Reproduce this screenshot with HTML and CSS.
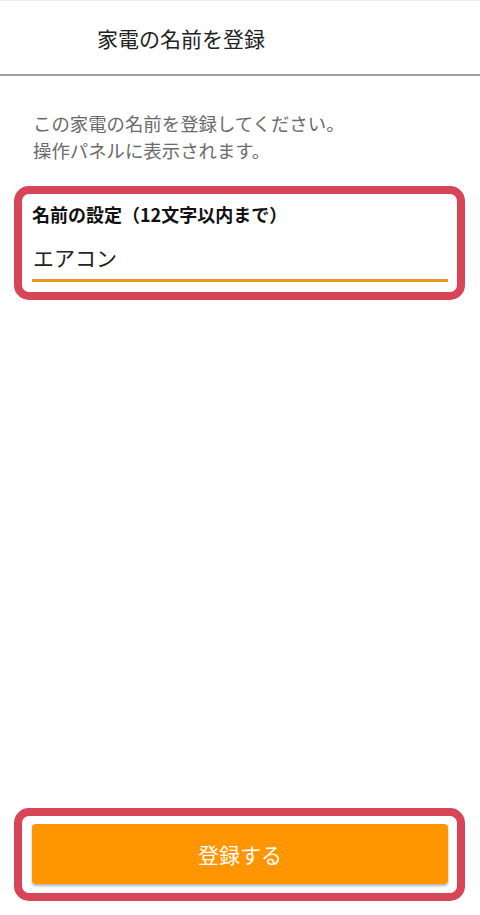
FILE: index.html
```html
<!DOCTYPE html>
<html lang="ja">
<head>
<meta charset="utf-8">
<title>家電の名前を登録</title>
<link rel="stylesheet" href="styles.css">
</head>
<body>
<div class="page">
  <header class="header">
    <h1 class="title">家電の名前を登録</h1>
  </header>
  <p class="desc">この家電の名前を登録してください。<br>操作パネルに表示されます。</p>
  <div class="highlight field-box">
    <label class="label" for="name">名前の設定（12文字以内まで）</label>
    <input class="input" id="name" type="text" value="エアコン">
  </div>
  <div class="highlight button-box">
    <button class="submit" type="button">登録する</button>
  </div>
</div>
</body>
</html>
```
FILE: styles.css
```css
html, body {
  margin: 0;
  padding: 0;
  background: #ffffff;
}
body {
  font-family: "Noto Sans CJK JP", "Noto Sans", sans-serif;
  color: #222;
}
.page {
  display: flex;
  flex-direction: column;
  min-height: 915px;
  box-sizing: border-box;
}
.header {
  height: 73px;
  border-top: 1px solid #ececec;
  border-bottom: 2px solid #a0a0a0;
  display: flex;
  align-items: center;
  padding-left: 97px;
}
.title {
  margin: 0;
  font-size: 21px;
  font-weight: 400;
  line-height: 28px;
  color: #222;
}
.desc {
  margin: 34px 0 0;
  padding-left: 33px;
  font-size: 18.4px;
  line-height: 27px;
  color: #6a6a6a;
}
.highlight {
  border: 8px solid #d84556;
  border-radius: 15px;
  margin: 0 15px 0 14px;
  background: #fff;
}
.field-box {
  margin-top: 22px;
  padding: 8px 9px 10px 10px;
  display: flex;
  flex-direction: column;
}
.label {
  font-size: 18px;
  font-weight: 700;
  line-height: 24px;
  color: #111;
}
.input {
  margin-top: 18px;
  border: none;
  border-bottom: 3px solid #f0961a;
  outline: none;
  padding: 0 0 9px 1px;
  font-family: "Noto Sans CJK JP", "Noto Sans", sans-serif;
  font-size: 21px;
  line-height: 26px;
  height: 26px;
  color: #222;
  background: transparent;
}
.button-box {
  margin-top: auto;
  margin-bottom: 14px;
  padding: 8px 9px 9px 10px;
}
.submit {
  display: block;
  width: 100%;
  height: 60px;
  border: none;
  border-radius: 4px;
  background: #ff9500;
  color: #fff;
  font-family: "Noto Sans CJK JP", "Noto Sans", sans-serif;
  font-size: 21px;
  box-shadow: 0 2px 3px rgba(0, 0, 0, 0.3);
}
```
